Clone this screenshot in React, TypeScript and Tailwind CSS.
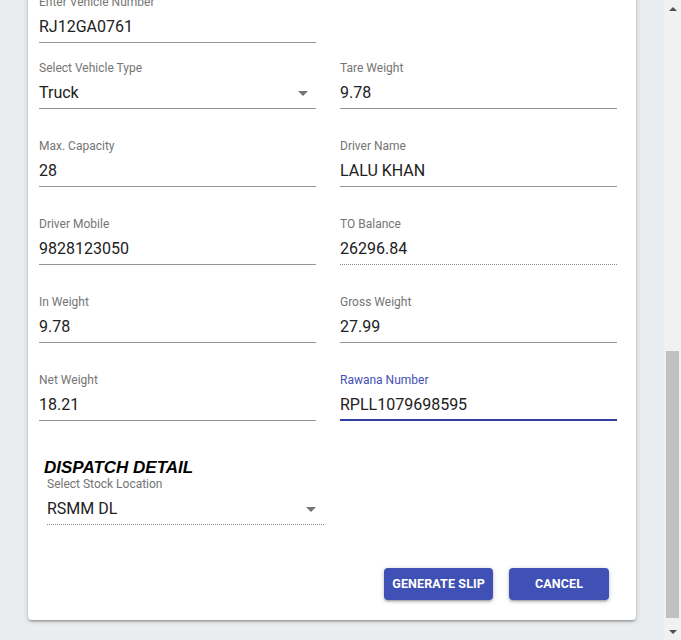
import React from "react";

type FieldProps = {
  label: string;
  value: string;
  select?: boolean;
  disabled?: boolean;
  focused?: boolean;
  className?: string;
};

function Field({ label, value, select, disabled, focused, className = "" }: FieldProps) {
  let line = "pb-[6px] border-b border-[#949494]";
  if (disabled) line = "pb-[6px] border-b border-dotted border-[#8a8a8a]";
  if (focused) line = "pb-[5px] border-b-2 border-[#303f9f]";
  return (
    <div className={`flex flex-col ${className}`}>
      <div className={`h-[14px] text-[12px] leading-[14px] ${focused ? "text-[#3f51b5]" : "text-[#757575]"}`}>
        {label}
      </div>
      <div className={`relative mt-[8px] ${line}`}>
        <div className="h-[19px] text-[16px] leading-[19px] text-[#212121]">{value}</div>
        {select && (
          <span className="absolute right-[8px] top-[8px] h-0 w-0 border-l-[5px] border-r-[5px] border-t-[5px] border-l-transparent border-r-transparent border-t-[#757575]" />
        )}
      </div>
    </div>
  );
}

export default function App() {
  return (
    <div
      className="flex h-[640px] w-full overflow-hidden bg-[#eaedf0]"
      style={{ fontFamily: "Roboto, 'Liberation Sans', sans-serif" }}
    >
      {/* Dialog area */}
      <div className="flex-1 pl-[28px]">
        <div className="-mt-[20px] w-[608px] rounded-b-[4px] bg-white pl-[11px] pr-[19px] pt-[15px] pb-[20px] shadow-[0_1px_5px_rgba(0,0,0,0.2),0_2px_2px_rgba(0,0,0,0.14),0_3px_1px_-2px_rgba(0,0,0,0.12)]">
          <div className="mb-[18px] grid grid-cols-2 gap-x-6">
            <Field label="Enter Vehicle Number" value="RJ12GA0761" />
            <div />
          </div>
          <div className="grid grid-cols-2 gap-x-6 gap-y-[30px]">
            <Field label="Select Vehicle Type" value="Truck" select />
            <Field label="Tare Weight" value="9.78" />
            <Field label="Max. Capacity" value="28" />
            <Field label="Driver Name" value="LALU KHAN" />
            <Field label="Driver Mobile" value="9828123050" />
            <Field label="TO Balance" value="26296.84" disabled />
            <Field label="In Weight" value="9.78" />
            <Field label="Gross Weight" value="27.99" />
            <Field label="Net Weight" value="18.21" />
            <Field label="Rawana Number" value="RPLL1079698595" focused />
          </div>

          {/* Dispatch detail */}
          <div className="mt-[38px]">
            <h3
              className="ml-[5px] h-[18px] text-[17px] font-bold italic leading-[18px] text-black"
              style={{ fontFamily: "'Liberation Sans', Arial, sans-serif" }}
            >
              DISPATCH DETAIL
            </h3>
            <Field label="Select Stock Location" value="RSMM DL" select disabled className="ml-[8px] w-[277px]" />
          </div>

          {/* Actions */}
          <div className="mt-[43px] flex justify-end gap-4 pr-[8px]">
            <button className="h-[32px] rounded-[4px] bg-[#3f51b5] px-[8px] text-[12.5px] font-bold uppercase tracking-[0.01em] text-white shadow-[0_1px_5px_rgba(0,0,0,0.2),0_2px_2px_rgba(0,0,0,0.14),0_3px_1px_-2px_rgba(0,0,0,0.12)]">
              Generate Slip
            </button>
            <button className="h-[32px] w-[100px] rounded-[4px] bg-[#3f51b5] text-[12.5px] font-bold uppercase tracking-[0.01em] text-white shadow-[0_1px_5px_rgba(0,0,0,0.2),0_2px_2px_rgba(0,0,0,0.14),0_3px_1px_-2px_rgba(0,0,0,0.12)]">
              Cancel
            </button>
          </div>
        </div>
      </div>

      {/* Scrollbar */}
      <div className="flex w-[17px] flex-col items-center bg-[#f1f1f1]">
        <div className="flex h-[17px] w-full items-center justify-center">
          <span className="h-0 w-0 border-b-[4px] border-l-[4px] border-r-[4px] border-b-[#505050] border-l-transparent border-r-transparent" />
        </div>
        <div className="flex-1 w-full px-[2px] pt-[334px] pb-[5px]">
          <div className="h-full w-full bg-[#c1c1c1]" />
        </div>
        <div className="flex h-[17px] w-full items-center justify-center">
          <span className="h-0 w-0 border-t-[4px] border-l-[4px] border-r-[4px] border-t-[#505050] border-l-transparent border-r-transparent" />
        </div>
      </div>
    </div>
  );
}
